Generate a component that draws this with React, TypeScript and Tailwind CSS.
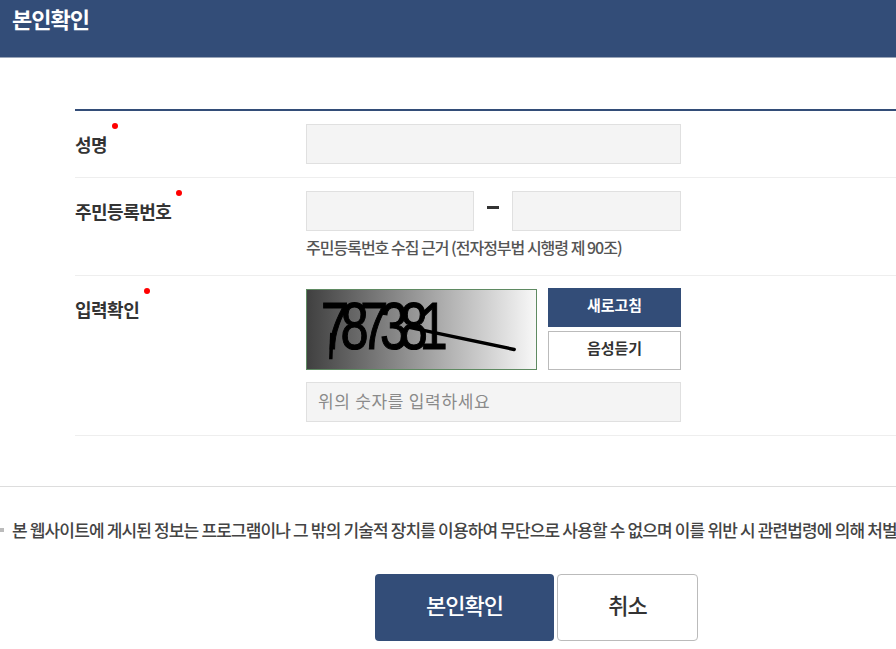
const font = "font-['Noto_Sans_CJK_KR','Noto_Sans',sans-serif]";

function Label({ text }: { text: string }) {
  return (
    <div className="w-[231px] shrink-0">
      <span className="relative inline-block text-[18px] font-bold leading-[24px] tracking-[-0.5px] text-[#333333]">
        {text}
        <span className="absolute right-[-11px] top-[-9px] h-[6px] w-[6px] rounded-full bg-[#ff0000]" />
      </span>
    </div>
  );
}

function Field({ className = "", placeholder }: { className?: string; placeholder?: string }) {
  return (
    <input
      placeholder={placeholder}
      className={`h-10 border border-[#e0e0e0] bg-[#f4f4f4] px-[11px] pb-[3px] text-[17px] tracking-[0.7px] outline-none placeholder:text-[#8a8a8a] ${className}`}
    />
  );
}

function Captcha() {
  return (
    <svg
      viewBox="0 0 231 81"
      preserveAspectRatio="none"
      className="h-[81px] w-[231px] shrink-0 border border-[#5f8a62]"
    >
      <defs>
        <linearGradient id="captchaBg" x1="0" x2="1" y1="0" y2="0">
          <stop offset="0" stopColor="#404040" />
          <stop offset="1" stopColor="#f8f8f8" />
        </linearGradient>
      </defs>
      <rect width="231" height="81" fill="url(#captchaBg)" />
      <text
        transform="translate(14 61) scale(0.75 1)"
        letterSpacing="-7.5"
        fontFamily="'Liberation Sans', sans-serif"
        fontSize="68"
        fill="#000000"
        stroke="#000000"
        strokeWidth="1.2"
        textLength="163"
      >
        787381
      </text>
      <path d="M102 38 L209 61" stroke="#000000" strokeWidth="3.5" strokeLinecap="round" />
      <path d="M25 44 L24 71" stroke="#000000" strokeWidth="3.5" />
    </svg>
  );
}

export default function App() {
  return (
    <div className={`h-[649px] w-[896px] overflow-hidden bg-white ${font}`}>
      <header className="h-[58px] border-b border-[#9aa5b8] bg-[#334d78] pl-3 pt-[3px]">
        <h1 className="text-[22px] font-bold leading-[30px] tracking-[-1px] text-white">본인확인</h1>
      </header>

      <div className="ml-[75px] mt-[51px] w-[900px] border-t-2 border-[#334d78]">
        <div className="flex h-[67px] items-center border-b border-[#eeeeee]">
          <Label text="성명" />
          <Field className="w-[375px]" />
        </div>

        <div className="flex h-[98px] border-b border-[#eeeeee] pt-[13px]">
          <div className="pt-2">
            <Label text="주민등록번호" />
          </div>
          <div>
            <div className="flex w-[375px] items-center justify-between">
              <Field className="w-[168px]" />
              <span className="mb-[8px] h-[3px] w-3 bg-[#333333]" />
              <Field className="w-[169px]" />
            </div>
            <p className="mt-[6px] text-[16px] font-medium leading-5 tracking-[-1px] text-[#555555]">
              주민등록번호 수집 근거 (전자정부법 시행령 제 90조)
            </p>
          </div>
        </div>

        <div className="flex h-[160px] border-b border-[#eeeeee] pt-[12px]">
          <div className="pt-[9px]">
            <Label text="입력확인" />
          </div>
          <div className="w-[375px]">
            <div className="flex justify-between">
              <div className="pt-px">
                <Captcha />
              </div>
              <div className="flex w-[133px] flex-col gap-[4px]">
                <button className="h-[39px] bg-[#334d78] pb-1 text-[15px] font-bold tracking-[-0.1px] text-white">
                  새로고침
                </button>
                <button className="h-[39px] border border-[#bbbbbb] bg-white pb-1 text-[15px] font-bold tracking-[-0.1px] text-[#333333]">
                  음성듣기
                </button>
              </div>
            </div>
            <Field className="mt-[12px] w-full" placeholder="위의 숫자를 입력하세요" />
          </div>
        </div>
      </div>

      <div className="mt-[50px] border-t border-[#dddddd] pt-[33px]">
        <div className="flex items-center whitespace-nowrap">
          <span className="h-1 w-1 shrink-0 bg-[#bbbbbb]" />
          <p className="ml-2 text-[17px] font-medium leading-5 tracking-[-0.85px] text-[#444444]">
            본 웹사이트에 게시된 정보는 프로그램이나 그 밖의 기술적 장치를 이용하여 무단으로 사용할 수 없으며 이를 위반 시 관련법령에 의해 처벌을 받을 수 있습니다.
          </p>
        </div>
      </div>

      <div className="ml-[375px] mt-[34px] flex gap-[3px]">
        <button className="h-[67px] w-[179px] rounded bg-[#334d78] pb-[6px] text-[22px] font-medium tracking-[-1px] text-white">
          본인확인
        </button>
        <button className="h-[67px] w-[141px] rounded border border-[#bbbbbb] bg-white pb-[6px] text-[22px] font-medium tracking-[-1px] text-[#333333]">
          취소
        </button>
      </div>
    </div>
  );
}
